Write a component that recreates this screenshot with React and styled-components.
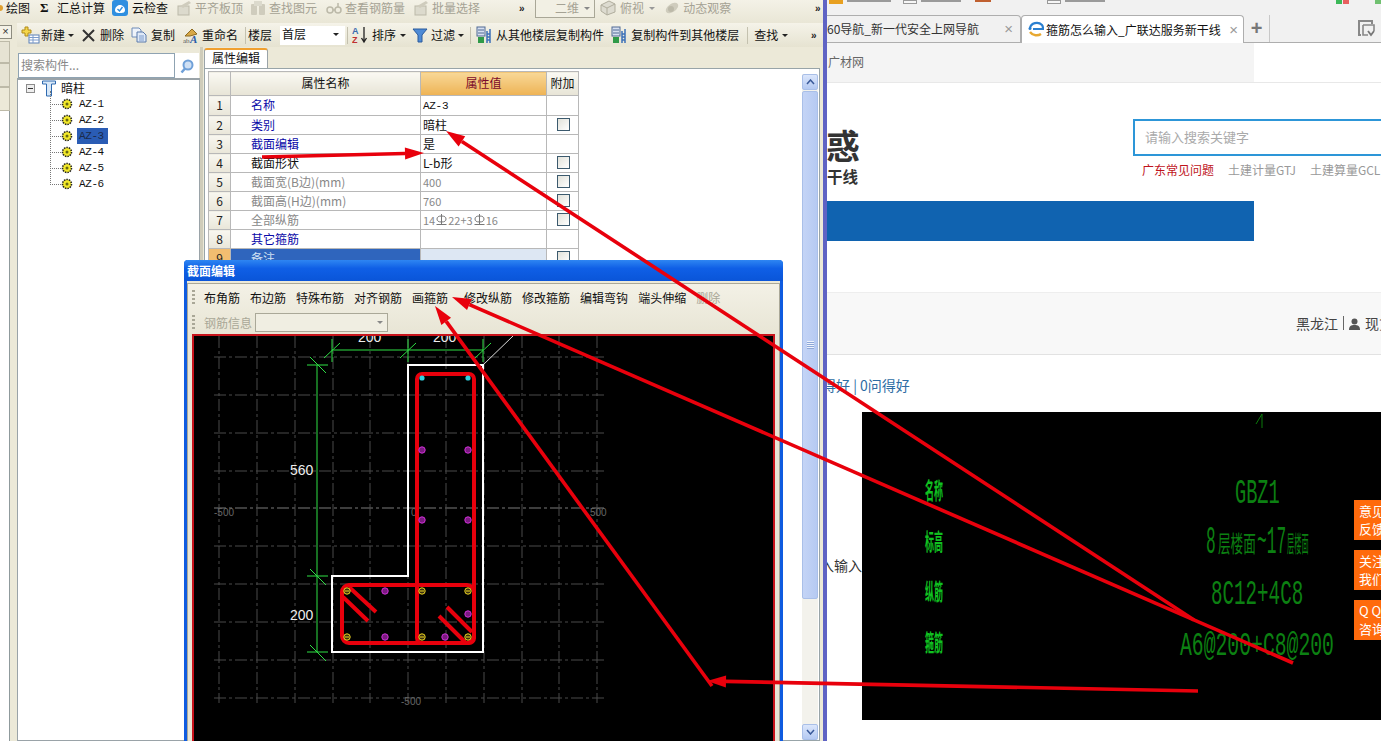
import React from "react";
import styled, { createGlobalStyle } from "styled-components";

const Global = createGlobalStyle`
  html, body { margin: 0; padding: 0; background: #fff; }
  body { font-family: "Noto Sans CJK SC", "Liberation Sans", sans-serif; font-size: 12px; color: #111; }
  * { box-sizing: border-box; }
`;
const Page = styled.div`position: relative; display: flex; width: 1381px; height: 741px; overflow: hidden;`;
const LeftApp = styled.div`width: 823px; height: 741px; display: flex; flex-direction: column; background: #ece9d8; flex: none;`;
const Divider = styled.div`width: 4px; background: #5f63c4; flex: none;`;
const Browser = styled.div`flex: 1; min-width: 0; height: 741px; display: flex; flex-direction: column; background: #fff; overflow: hidden;`;

const TopBar = styled.div`height: 23px; display: flex; align-items: center; padding-bottom: 7px; background: linear-gradient(#f4f2e7, #e9e6d6); white-space: nowrap; line-height: 14px;`;
const TopDot = styled.span`width: 3px; height: 6px; background: #e0a030; border-radius: 0 3px 3px 0; flex: none;`;
const Tool = styled.span`
  display: inline-flex; align-items: center; flex: none; gap: ${p => p.$gap ?? 3}px; margin-left: ${p => p.$ml ?? 0}px;
  color: ${p => (p.$off ? "#a5a294" : "#111")}; white-space: nowrap;
`;
const Sigma = styled.span`font: bold 13px "Liberation Serif", serif; margin-left: 10px; width: 9px;`;
const More = styled.span`
  font: bold 10px "Liberation Sans", sans-serif; width: 8px; letter-spacing: -1px; color: #222; flex: none;
  margin-left: ${p => (p.$end ? "auto" : `${p.$ml ?? 0}px`)}; margin-right: ${p => p.$mr ?? 0}px;
`;
const ViewBox = styled.span`
  display: inline-flex; align-items: center; justify-content: space-between; width: 60px; height: 20px; margin-left: 8px; flex: none;
  border: 1px solid #a9a797; padding: 0 4px 0 19px; color: #a5a294; background: #f2f0e4;
`;
const Caret = styled.span`
  width: 0; height: 0; border-left: 3px solid transparent; border-right: 3px solid transparent; border-top: 3px solid ${p => p.$c || "#222"};
  margin-left: ${p => p.$ml ?? 0}px; flex: none;
`;
const Body = styled.div`flex: 1; min-height: 0; display: flex;`;
const SideStrip = styled.div`width: 12px; margin-right: 5px; flex: none; display: flex; flex-direction: column; padding-top: 2px;`;
const CloseTab = styled.div`height: 14px; border: 1px solid #8d8c80; border-left: 0; background: #f4f2e7; font: 11px/11px "Liberation Sans", sans-serif; text-align: center; color: #333;`;
const SideBlock = styled.div`height: ${p => p.$h}px; width: 10px; background: ${p => p.$c}; border: 1px solid #bdbaa8; border-left: 0; margin-top: ${p => p.$mt ?? 0}px;`;
const SideWhite = styled.div`flex: 1; width: 10px; background: #fff; border-right: 1px solid #8f9a9c;`;
const Main = styled.div`flex: 1; min-width: 0; display: flex; flex-direction: column;`;
const SecondBar = styled.div`height: 24px; display: flex; align-items: center; background: linear-gradient(#f5f3e9, #e6e3d1); line-height: 14px;`;
const Sep = styled.span`width: 1px; height: 17px; background: #c4c1af; margin-left: ${p => p.$ml ?? 0}px; flex: none;`;
const FloorSelect = styled.span`
  width: 65px; height: 19px; margin-left: 8px; background: #fff; display: inline-flex; align-items: center; justify-content: space-between;
  padding: 0 6px 2px 2px; flex: none;
`;
const Columns = styled.div`flex: 1; min-height: 0; display: flex;`;
const TreePanel = styled.div`width: 183px; flex: none; display: flex; flex-direction: column; padding-top: 6px;`;
const SearchRow = styled.div`height: 25px; display: flex; background: #fff; width: 181px; margin-left: 1px;`;
const SearchInput = styled.div`width: 157px; height: 25px; border: 1px solid #8fa3b2; color: #888; padding: 3px 2px; background: #fff; line-height: 16px;`;
const SearchBtn = styled.div`flex: 1; display: flex; align-items: center; justify-content: center;`;
const Tree = styled.div`flex: 1; background: #fff; border: 1px solid #9aa3a8; border-top: 2px solid #9aa3a8; position: relative;`;
const RootRow = styled.div`height: 16px; display: flex; align-items: center; padding-left: 8px; gap: 5px; line-height: 14px;`;
const MinusBox = styled.span`width: 9px; height: 9px; border: 1px solid #8c8c8c; background: #eee; display: flex; align-items: center; justify-content: center; margin-right: 2px; &::after{content:""; width:5px;height:1px;background:#333;}`;
const ChildRow = styled.div`
  position: relative; height: 16px; display: flex; align-items: center; padding-left: 43px; gap: 4px;
  &::before { content: ""; position: absolute; left: 32px; top: ${p => (p.$first ? -5 : -8)}px; width: 10px; height: ${p => (p.$first ? 13 : 16)}px; border-left: 1px dotted #777; border-bottom: 1px dotted #777; }
`;
const ChildLabel = styled.span`
  width: 31px; height: 16px; padding-left: 2px; font: 11px/16px "Liberation Mono", monospace; letter-spacing: -.4px;
  background: ${p => (p.$sel ? "#2a5cb4" : "transparent")}; color: ${p => (p.$sel ? "#1a2a4a" : "#111")};
`;
const Splitter = styled.div`width: 3px; background: #cfccba; flex: none;`;
const Editor = styled.div`width: 617px; flex: none; display: flex; flex-direction: column; padding-left: 1px;`;
const TabRow = styled.div`height: 21px; display: flex; align-items: flex-end;`;
const Tab = styled.div`height: 20px; width: 64px; background: #fff; border: 1px solid #9aa3a8; border-top: 2px solid #f0a030; border-bottom: 0; border-radius: 3px 3px 0 0; text-align: center; line-height: 15px;`;
const Sheet = styled.div`flex: 1; min-height: 0; background: #fff; border: 1px solid #98a4a8; border-right: 1px solid #98a4a8; display: flex; padding: 2px 1px 0 3px; justify-content: space-between;`;
const PropTable = styled.table`
  border-collapse: collapse; table-layout: fixed; width: 370px; height: max-content; border: 1px solid #b4b4b4;
  td, th { border: 1px solid #b8b8b8; padding: 0 0 1px; height: 19px; line-height: 16px; font-weight: normal; overflow: hidden; white-space: nowrap; }
`;
const HeadCell = styled.th`
  && { height: 24px; } text-align: center; background: ${p => (p.$hot ? "linear-gradient(#f8d898,#eeb354)" : "linear-gradient(#faf9f3,#e7e4d6)")};
  color: ${p => (p.$hot ? "#7a0a2a" : "#111")};
`;
const NumCell = styled.td`text-align: center; background: ${p => (p.$hot ? "#f2bd70" : "linear-gradient(#f8f7f0,#e9e6d9)")}; color: #222;`;
const NameCell = styled.td`
  && { padding-left: 20px; } color: ${p => p.$c}; background: ${p => (p.$sel ? "#2f65bd" : "#fff")};
`;
const ValueCell = styled.td`&& { padding-left: 2px; } color: ${p => p.$c || "#111"}; background: ${p => (p.$sel ? "#dde7f3" : "#fff")};`;
const Small = styled.span`font-size: 11px; display: inline-flex; align-items: center;`;
const Mono = styled.span`font-family: "Liberation Mono", monospace; font-size: 11px; letter-spacing: -.3px;`;
const CheckCell = styled.td`&& { padding-left: 1px; } text-align: center;`;
const Check = styled.span`display: block; width: 13px; height: 13px; margin: 0 auto; border: 1px solid #3c5a6e; background: linear-gradient(135deg, #e2e2da, #fff);`;
const ScrollTrack = styled.div`width: 16px; margin-top: 3px; display: flex; flex-direction: column; background: #f3f2ec; flex: none;`;
const ScrollBtn = styled.div`height: 16px; background: linear-gradient(#dbe6fb, #b4c9f2); border: 1px solid #a9bfe8; border-radius: 2px; display: flex; align-items: center; justify-content: center; color: #3a5a9a;`;
const ScrollThumb = styled.div`
  height: 508px; margin-top: 1px; background: linear-gradient(90deg, #c4d4f6, #b6caf2); border: 1px solid #a9bfe8; border-radius: 2px;
  display: flex; align-items: center; justify-content: center;
  &::after { content: ""; width: 7px; height: 8px; background: repeating-linear-gradient(#eef3fd 0 1px, #8ea8d8 1px 2px); }
`;
const ScrollGap = styled.div`flex: 1;`;

const Dialog = styled.div`
  position: absolute; left: 184px; top: 260px; width: 599px; height: 481px; background: #ece9d8;
  border: 3px solid #0f5be0; border-top: 0; border-bottom: 0; display: flex; flex-direction: column; border-radius: 4px 4px 0 0;
`;
const DialogTitle = styled.div`height: 21px; margin: 0 -3px; padding: 2px 3px 0; color: #fff; font-weight: bold; background: linear-gradient(#2e86f2, #0f5fe6 40%, #0a55d8); line-height: 18px; border-radius: 4px 4px 0 0;`;
const DialogBody = styled.div`flex: 1; margin-top: 2px; border: 1px solid #aaa898; border-bottom: 0; display: flex; flex-direction: column; padding: 0 1px 0 4px; min-height: 0; background: linear-gradient(#f3f1e6, #e8e5d5 50px);`;
const DlgRow = styled.div`height: ${p => p.$h}px; display: flex; align-items: center; gap: 10px; padding-left: 0; flex: none;`;
const Grip = styled.span`width: 3px; height: 14px; margin-right: -1px; flex: none; background: repeating-linear-gradient(#a9a797 0 2px, transparent 2px 4px);`;
const DlgItem = styled.span`color: ${p => (p.$off ? "#a9a797" : "#111")}; flex: none; margin-left: ${p => p.$ml ?? 0}px;`;
const DlgSelect = styled.span`width: 133px; height: 19px; margin-left: -7px; border: 1px solid #aaa898; background: #f0eee2; display: inline-flex; align-items: center; justify-content: flex-end; padding-right: 4px;`;
const Canvas = styled.div`flex: 1; min-height: 0; width: 583px; border: 2px solid #c8141c; border-bottom: 0; background: #000; overflow: hidden; svg { display: block; }`;

const TopStrip = styled.div`height: 5px; flex: none; background: #f1f1f1; display: flex; align-items: flex-start; overflow: hidden;`;
const Chip = styled.span`width: ${p => p.$w}px; height: ${p => p.$h ?? 4}px; margin-left: ${p => p.$ml}px; background: ${p => p.$c}; flex: none; border: ${p => (p.$line ? "1px solid #999" : "0")};`;
const TabStrip = styled.div`height: 38px; flex: none; background: #f1f1f1; border-bottom: 1px solid #aeaeae; display: flex; align-items: flex-end; padding-top: 10px;`;
const BTab = styled.div`
  width: ${p => p.$w}px; height: 28px; margin-bottom: -1px; flex: none; display: flex; align-items: center; padding: 0 ${p => p.$pr ?? 5}px 1px ${p => p.$pl ?? 0}px; gap: 2px; overflow: hidden;
  background: ${p => (p.$on ? "#fff" : "#f1f1f1")}; border: 1px solid #aeaeae; border-bottom: ${p => (p.$on ? "0" : "1px solid #aeaeae")}; border-radius: 4px 4px 0 0; color: ${p => (p.$on ? "#111" : "#333")};
  ${p => !p.$on && "border-left: 0; border-radius: 0 4px 0 0;"}
`;
const BTabText = styled.span`flex: 1; white-space: nowrap; overflow: hidden;`;
const BClose = styled.span`font: 15px/15px "Liberation Sans", sans-serif; color: #999;`;
const Plus = styled.span`width: 26px; height: 27px; flex: none; border-right: 1px solid #c8c8c8; text-align: center; font: bold 20px/26px "Liberation Sans", sans-serif; color: #777;`;
const RestoreWrap = styled.span`margin-left: 88px; margin-bottom: 5px; flex: none; display: flex;`;
const BookRow = styled.div`height: 40px; flex: none; border-bottom: 1px solid #e8e8e8;`;
const BookFill = styled.div`width: 427px; height: 39px; background: #f4f4f4; padding: 12px 0 0 1px; color: #666; line-height: 14px;`;
const HeadRow = styled.div`height: 118px; flex: none; position: relative; display: flex;`;
const Brand = styled.div`width: 306px; padding-top: 43px; color: #333; font-weight: bold; flex: none;`;
const BrandBig = styled.div`font-size: 34px; line-height: 38px; margin-left: -1px;`;
const BrandSmall = styled.div`font-size: 15.5px; line-height: 20px; margin-top: 2px;`;
const SearchCol = styled.div`flex: 1; padding-top: 36px; min-width: 0;`;
const WebSearch = styled.div`width: 300px; height: 37px; border: 2px solid #2d96d8; padding-left: 10px; line-height: 31px; color: #aaa; font-size: 13px;`;
const HotLinks = styled.div`display: flex; margin: 5px 0 0 9px; line-height: 18px; white-space: nowrap; color: #999;`;
const HotLink = styled.span`margin-right: 14px; flex: none; color: ${p => p.$c || "#999"};`;
const BlueBar = styled.div`width: 427px; height: 40px; flex: none; background: #1063b0;`;
const NavBand = styled.div`
  height: 63px; margin-top: 51px; flex: none; background: #f8f8f8; border-top: 1px solid #eee; border-bottom: 1px solid #e2e2e2;
  padding: 20px 0 0 469px; display: flex; align-items: flex-start; font-size: 14px; line-height: 20px; color: #444; white-space: nowrap; gap: 5px;
`;
const NavBar = styled.span`width: 1px; height: 14px; background: #666; margin-top: 3px; flex: none;`;
const NavUser = styled.span`margin-top: 5px; display: flex; flex: none;`;
const Meta = styled.div`height: 57px; flex: none; margin-left: -5px; padding-top: 20px; font-size: 14px; line-height: 20px; color: #2e6da4; white-space: nowrap;`;
const ContentRow = styled.div`flex: 1; display: flex; min-height: 0;`;
const Lead = styled.div`width: 35px; padding-top: 143px; font-size: 14px; line-height: 20px; color: #333; white-space: nowrap; overflow: hidden; direction: rtl; flex: none;`;
const Picture = styled.div`width: 519px; height: 308px; background: #000; flex: none; svg { display: block; }`;
const SideBtns = styled.div`position: absolute; left: 1354px; top: 500px; width: 27px; display: flex; flex-direction: column; gap: 10px; overflow: hidden;`;
const SideBtn = styled.div`width: 40px; height: 40px; background: #ff6a0c; color: #fff; font-size: 13px; line-height: 18px; padding: 2px 0 0 5px;`;
const Overlay = styled.svg`position: absolute; left: 0; top: 0; pointer-events: none;`;

/* --- icons --- */
const I = ({ children, w = 16, h = 16 }) => <svg width={w} height={h} viewBox={`0 0 ${w} ${h}`} style={{ flex: "none" }}>{children}</svg>;
const IcNew = () => <I w={20} h={18}><path d="M5 1h3v3h3v3H8v3H5V7H2V4h3z" fill="#f5d64a" stroke="#b08a18" /><rect x="9" y="9" width="10" height="8" fill="#fff" stroke="#5b80b8" /><path d="M9 11.5h10M9 14h10M13 9v8" stroke="#7c9ccc" /></I>;
const IcX = () => <I w={13} h={13}><path d="M1 1l11 11M12 1L1 12" stroke="#333" strokeWidth="2" /></I>;
const IcCopy = () => <I><path d="M1 1h7l2 2v7H1z" fill="#eef3fa" stroke="#6f8cb8" /><path d="M6 5h6l3 3v7H6z" fill="#dfe9f7" stroke="#5a7aac" /><path d="M8 9h5M8 11h5M8 13h5" stroke="#7c9ccc" /></I>;
const IcRename = () => <I w={16} h={17}><path d="M2 9l7-7 5 5-7 2z" fill="#d8a848" stroke="#8d6a20" /><text x="0" y="16" fontSize="7" fontFamily="Liberation Serif" fill="#555">ab</text><text x="7" y="16" fontSize="11" fontWeight="bold" fontStyle="italic" fontFamily="Liberation Serif" fill="#2a5ca8">A</text></I>;
const IcSort = () => <I w={16} h={18}><text x="0" y="8" fontSize="9" fontWeight="bold" fontFamily="Liberation Sans" fill="#3a6cb0">A</text><text x="0" y="17" fontSize="9" fontWeight="bold" fontFamily="Liberation Sans" fill="#c03030">Z</text><path d="M12 1v14M9.5 12l2.5 4 2.5-4" stroke="#222" fill="none" strokeWidth="1.3" /></I>;
const IcFilter = ({ c = "#4d8ad6" }) => <I><path d="M1 2h14L10 8v7H6V8z" fill={c} stroke="#2a5a9c" /></I>;
const IcCopyFloor = () => <I w={17} h={18}><rect x="1" y="1" width="8" height="9" fill="#d6dff0" stroke="#506a94" /><path d="M2 4h6M2 7h6" stroke="#506a94" /><rect x="2" y="11" width="6" height="6" fill="#2f9a48" /><path d="M11 5v12M14 3v14M11 8h3M11 11h3M11 14h3" stroke="#3d70b8" strokeWidth="1.5" /></I>;
const IcCloud = () => <I><rect width="16" height="16" rx="3" fill="#2f8fe0" /><path d="M3 10c0-3 3-5 5-5s5 2 5 5-3 3-5 3-5 0-5-3z" fill="#fff" /><path d="M5.5 9l2 2 3-4" stroke="#2f8fe0" strokeWidth="1.4" fill="none" /></I>;
const IcGhost = () => <I><rect x="2" y="6" width="11" height="9" fill="#dcdacd" stroke="#bcb9a9" /><path d="M4 6l9-5 2 2-8 5" fill="#cfccbd" /></I>;
const IcBinoc = () => <I><rect x="1" y="4" width="6" height="11" rx="1" fill="#cfccbd" /><rect x="9" y="4" width="6" height="11" rx="1" fill="#cfccbd" /><rect x="4" y="1" width="8" height="5" fill="#dcdacd" /></I>;
const IcGlasses = () => <I><circle cx="4" cy="10" r="3" fill="none" stroke="#bcb9a9" strokeWidth="1.5" /><circle cx="12" cy="10" r="3" fill="none" stroke="#bcb9a9" strokeWidth="1.5" /><path d="M7 10h2M12 7V3" stroke="#bcb9a9" strokeWidth="1.5" /></I>;
const IcCube = () => <I><path d="M1 5l8-4 6 3v8l-8 3-6-4z" fill="#dddbd0" stroke="#b0ad9d" /><path d="M1 5l6 3v7M7 8l8-4" stroke="#b0ad9d" fill="none" /></I>;
const IcOrbit = () => <I><ellipse cx="8" cy="8" rx="7" ry="4" transform="rotate(-35 8 8)" fill="#cfccbd" /><circle cx="7" cy="9" r="3" fill="#bcb9a9" /></I>;
const IcLens = () => <I><circle cx="9" cy="7" r="4.5" fill="#cfe0f4" stroke="#6fa0d8" strokeWidth="2" /><path d="M6 10.5l-3.5 4" stroke="#6fa0d8" strokeWidth="2.5" /></I>;
const IcFunnelTree = () => <I w={14} h={17}><path d="M0.5 1h13v3h-4v12h-5V4h-4z" fill="#d8e8f8" stroke="#2f6ab0" /></I>;
const IcGear = () => <I w={12} h={12}><circle cx="6" cy="6" r="4.5" fill="#f4ea2a" stroke="#222" strokeWidth="1.6" strokeDasharray="1.5 1" /><circle cx="6" cy="6" r="1.5" fill="#6a6a10" /></I>;
const IcIE = () => <I><path d="M2 7c1-5 8-7 12-3 1 1 1 3 1 4H5" stroke="#2a7fd0" strokeWidth="2.2" fill="none" /><path d="M2 11c3 4 8 4 11 2" stroke="#e8a830" strokeWidth="2.4" fill="none" /><circle cx="2" cy="7.5" r="1.5" fill="#2a7fd0" /></I>;
const IcUser = () => <I w={11} h={12}><circle cx="5.5" cy="3.5" r="3" fill="#555" /><path d="M0 12c0-4 2-5 5.5-5s5.5 1 5.5 5z" fill="#555" /></I>;
const IcRestore = () => <I w={17} h={17}><path d="M3 15H1V1h13v3" fill="none" stroke="#888" strokeWidth="2" /><path d="M5 5h11v6M5 5v10h5" fill="none" stroke="#888" strokeWidth="1.6" /><path d="M10 11l3 4 3-4" fill="none" stroke="#777" strokeWidth="1.8" /></I>;
const Rebar = () => <svg width="11" height="11" viewBox="0 0 11 11" style={{ margin: "0 1px" }}><path d="M5.5 0v10M0.5 10.5h10" stroke="#777" /><ellipse cx="5.5" cy="5" rx="4.5" ry="3" fill="none" stroke="#777" /></svg>;

/* --- drawings --- */
const Arrow = ({ x1, y1, x2, y2, w = 3.6, head = 19, wide = 6 }) => {
  const a = Math.atan2(y2 - y1, x2 - x1);
  const c = Math.cos(a), s = Math.sin(a);
  const bx = x2 - c * head, by = y2 - s * head;
  const pts = `${x2},${y2} ${bx - s * wide},${by + c * wide} ${bx + s * wide},${by - c * wide}`;
  return <g><line x1={x1} y1={y1} x2={bx} y2={by} stroke="#e8000c" strokeWidth={w} /><polygon points={pts} fill="#e8000c" /></g>;
};
const hGrid = [358, 396, 434, 472, 509, 547, 585, 623, 661, 699];
const vGrid = [219, 257, 295, 333, 370, 408, 446, 484, 522, 559, 597];
const cyan = [[422, 379], [468, 379]];
const magenta = [[422, 451], [468, 451], [422, 521], [468, 521], [385, 592], [468, 615], [385, 638], [445, 638]];
const yellow = [[347, 592], [422, 592], [468, 592], [347, 638], [422, 638], [468, 638]];
const G = "#2fe045";
const CadDrawing = () => (
  <svg width="579" height="404" viewBox="194 337 579 404">
    {hGrid.map(y => <line key={y} x1="214" x2="604" y1={y} y2={y} stroke={y === 509 ? "#7a7a7a" : "#4a4a4a"} strokeDasharray="12 3 3 3" />)}
    {vGrid.map(x => <line key={x} x1={x} x2={x} y1="337" y2="704" stroke="#4a4a4a" strokeDasharray="12 3 3 3" />)}
    <g fontFamily="Liberation Sans" fontSize="10" fill="#666">
      <text x="214" y="517">-500</text><text x="411" y="517">0</text><text x="590" y="517">500</text><text x="401" y="706">-500</text>
    </g>
    <g stroke={G} fill="none">
      <path d="M332 351H483M317 366V653" />
      <path d="M332 340V363M408 340V363M483 340V363M324 359L340 344M400 359L416 344M475 359L491 344" />
      <path d="M307 366H328M310 358L326 374M307 577H328M310 570L326 586M307 653H328M310 646L326 662" />
    </g>
    <g fontFamily="Liberation Sans" fontSize="14" fill="#eee">
      <text x="358" y="343">200</text><text x="433" y="343">200</text><text x="290" y="476">560</text><text x="290" y="621">200</text>
    </g>
    <path d="M483 366L513 337" stroke="#ddd" />
    <path d="M408 366H483V653H332V577H408Z" fill="none" stroke="#fff" strokeWidth="2" />
    <g fill="none" stroke="#e8000c" strokeWidth="4" strokeLinejoin="round">
      <rect x="417" y="375" width="57" height="269" rx="5" />
      <rect x="342" y="586" width="132" height="58" rx="7" />
      <path d="M349 588L376 613M343 598L368 622M447 608L472 633M439 617L465 643" />
    </g>
    {cyan.map(([x, y]) => <circle key={`c${x}${y}`} cx={x} cy={y} r="2.6" fill="#30d0e0" />)}
    {magenta.map(([x, y]) => <circle key={`m${x}${y}`} cx={x} cy={y} r="3.2" fill="#7a1a80" stroke="#d030d8" />)}
    {yellow.map(([x, y]) => <g key={`y${x}${y}`}><circle cx={x} cy={y} r="3.2" fill="#3a3010" stroke="#f0d820" /><line x1={x - 2} x2={x + 2} y1={y} y2={y} stroke="#f0d820" /></g>)}
  </svg>
);
const Squeezed = ({ x, y, sx, sy, size = 12, c = "#0c8012", weight = "normal", children, family = "Liberation Mono" }) => (
  <text transform={`translate(${x} ${y}) scale(${sx} ${sy})`} fontSize={size} fill={c} fontWeight={weight} fontFamily={family}>{children}</text>
);
const Label = ({ y, children }) => <Squeezed x={925} y={y} sx={0.75} sy={1.9} c="#10c020" weight="bold" family="Noto Sans CJK SC">{children}</Squeezed>;
const GreenSheet = () => (
  <svg width="519" height="308" viewBox="862 412 519 308">
    <path d="M1262 414V428M1262 414L1256 424" stroke="#0a7a0a" fill="none" />
    <Label y={499}>名称</Label>
    <Label y={550}>标高</Label>
    <Label y={600}>纵筋</Label>
    <Label y={651}>箍筋</Label>
    <Squeezed x={1235} y={503} sx={1.24} sy={2.3} size={15}>GBZ1</Squeezed>
    <Squeezed x={1206} y={553} sx={0.95} sy={2.3} size={17}>8</Squeezed>
    <Squeezed x={1218} y={552} sx={1.05} sy={1.9} size={12} family="Noto Sans CJK SC">层楼面</Squeezed>
    <Squeezed x={1257} y={553} sx={0.95} sy={2.3} size={17}>~17</Squeezed>
    <Squeezed x={1287} y={552} sx={0.6} sy={1.9} size={12} family="Noto Sans CJK SC">层楼面</Squeezed>
    <Squeezed x={1211} y={604} sx={1.13} sy={2.05} size={17}>8C12+4C8</Squeezed>
    <Squeezed x={1180} y={655} sx={1.41} sy={2.4} size={14}>A6@200+C8@200</Squeezed>
  </svg>
);

const rows = [
  { n: 1, name: "名称", c: "#0a0aa8", value: <Mono>AZ-3</Mono>, check: false },
  { n: 2, name: "类别", c: "#0a0aa8", value: "暗柱", check: true },
  { n: 3, name: "截面编辑", c: "#0a0aa8", value: "是", check: false },
  { n: 4, name: "截面形状", c: "#111", value: "L-b形", check: true },
  { n: 5, name: "截面宽(B边)(mm)", c: "#888", value: <Small>400</Small>, vc: "#888", check: true },
  { n: 6, name: "截面高(H边)(mm)", c: "#888", value: <Small>760</Small>, vc: "#888", check: true },
  { n: 7, name: "全部纵筋", c: "#888", value: <Small>14<Rebar />22+3<Rebar />16</Small>, vc: "#888", check: true },
  { n: 8, name: "其它箍筋", c: "#0a0aa8", value: "", check: false },
  { n: 9, name: "备注", c: "#cfe0f4", value: "", sel: true, check: true },
];
const dlgItems = ["布角筋", "布边筋", "特殊布筋", "对齐钢筋", "画箍筋"];
const dlgItems2 = ["修改箍筋", "编辑弯钩", "端头伸缩"];

export default function App() {
  return (
    <Page>
      <Global />
      <LeftApp>
        <TopBar>
          <TopDot />
          <Tool $ml={3}>绘图</Tool>
          <Sigma>Σ</Sigma>
          <Tool $ml={8}>汇总计算</Tool>
          <Tool $ml={7} $gap={4}><IcCloud />云检查</Tool>
          <Tool $ml={8} $off><IcGhost />平齐板顶</Tool>
          <Tool $ml={7} $off><IcBinoc />查找图元</Tool>
          <Tool $ml={9} $off><IcGlasses />查看钢筋量</Tool>
          <Tool $ml={8} $off><IcGhost />批量选择</Tool>
          <More $ml={39}>»</More>
          <ViewBox>二维<Caret $c="#888" /></ViewBox>
          <Tool $ml={5} $gap={4} $off><IcCube />俯视<Caret $c="#999" $ml={1} /></Tool>
          <Tool $ml={9} $off><IcOrbit />动态观察</Tool>
          <More $end>»</More>
        </TopBar>
        <Body>
          <SideStrip>
            <CloseTab>×</CloseTab>
            <SideBlock $h={22} $c="#e6e3d3" $mt={2} />
            <SideBlock $h={24} $c="#e6e3d3" />
            <SideBlock $h={24} $c="#ece9d8" />
            <SideWhite />
          </SideStrip>
          <Main>
            <SecondBar>
              <Tool $ml={3} $gap={1}><IcNew />新建<Caret $ml={2} /></Tool>
              <Tool $ml={8} $gap={5}><IcX />删除</Tool>
              <Tool $ml={7} $gap={4}><IcCopy />复制</Tool>
              <Tool $ml={8} $gap={3}><IcRename />重命名</Tool>
              <Sep $ml={7} />
              <Tool $ml={2}>楼层</Tool>
              <FloorSelect>首层<Caret /></FloorSelect>
              <Sep $ml={2} />
              <Tool $ml={4} $gap={4}><IcSort />排序<Caret /></Tool>
              <Tool $ml={6}><IcFilter />过滤<Caret /></Tool>
              <Sep $ml={6} />
              <Tool $ml={5}><IcCopyFloor />从其他楼层复制构件</Tool>
              <Tool $ml={7}><IcCopyFloor />复制构件到其他楼层</Tool>
              <Sep $ml={8} />
              <Tool $ml={6}>查找<Caret $ml={1} /></Tool>
              <More $end $mr={4}>»</More>
            </SecondBar>
            <Columns>
              <TreePanel>
                <SearchRow>
                  <SearchInput>搜索构件...</SearchInput>
                  <SearchBtn><IcLens /></SearchBtn>
                </SearchRow>
                <Tree>
                  <RootRow><MinusBox /><IcFunnelTree />暗柱</RootRow>
                  {["AZ-1", "AZ-2", "AZ-3", "AZ-4", "AZ-5", "AZ-6"].map((t, i) => (
                    <ChildRow key={t} $first={i === 0}><IcGear /><ChildLabel $sel={t === "AZ-3"}>{t}</ChildLabel></ChildRow>
                  ))}
                </Tree>
              </TreePanel>
              <Splitter />
              <Editor>
                <TabRow><Tab>属性编辑</Tab></TabRow>
                <Sheet>
                  <PropTable>
                    <colgroup><col width="22" /><col width="190" /><col width="126" /><col width="32" /></colgroup>
                    <thead>
                      <tr><HeadCell /><HeadCell>属性名称</HeadCell><HeadCell $hot>属性值</HeadCell><HeadCell>附加</HeadCell></tr>
                    </thead>
                    <tbody>
                      {rows.map(r => (
                        <tr key={r.n}>
                          <NumCell $hot={r.sel}>{r.n}</NumCell>
                          <NameCell $c={r.c} $sel={r.sel}>{r.name}</NameCell>
                          <ValueCell $c={r.vc} $sel={r.sel}>{r.value}</ValueCell>
                          <CheckCell>{r.check && <Check />}</CheckCell>
                        </tr>
                      ))}
                    </tbody>
                  </PropTable>
                  <ScrollTrack>
                    <ScrollBtn><svg width="9" height="6"><path d="M1 5l3.5-4L8 5" fill="none" stroke="#3a5a9a" strokeWidth="1.5" /></svg></ScrollBtn>
                    <ScrollThumb />
                    <ScrollGap />
                    <ScrollBtn><svg width="9" height="6"><path d="M1 1l3.5 4L8 1" fill="none" stroke="#3a5a9a" strokeWidth="1.5" /></svg></ScrollBtn>
                  </ScrollTrack>
                </Sheet>
              </Editor>
            </Columns>
          </Main>
        </Body>
      </LeftApp>
      <Divider />
      <Browser>
        <TopStrip>
          <Chip $ml={2} $w={14} $c="#e8a020" />
          <Chip $ml={4} $w={44} $c="#9a9a9a" $h={2} />
          <Chip $ml={12} $w={14} $c="#f6f6f6" $line />
          <Chip $ml={4} $w={40} $c="#9a9a9a" $h={2} />
          <Chip $ml={14} $w={16} $c="#c06030" $h={2} />
          <Chip $ml={56} $w={14} $c="#f6f6f6" $line />
          <Chip $ml={4} $w={40} $c="#9a9a9a" $h={2} />
          <Chip $ml={231} $w={6} $c="#3cb858" />
          <Chip $ml={1} $w={6} $c="#e86060" />
          <Chip $ml={26} $w={14} $c="#70c070" />
          <Chip $ml={8} $w={14} $c="#f4c0c0" $line />
          <Chip $ml={6} $w={14} $c="#f4c0c0" $line />
          <Chip $ml={24} $w={14} $c="#e8b840" />
        </TopStrip>
        <TabStrip>
          <BTab $w={194} $pr={7}><BTabText>60导航_新一代安全上网导航</BTabText><BClose>×</BClose></BTab>
          <BTab $w={223} $on $pl={6}><IcIE /><BTabText>箍筋怎么输入_广联达服务新干线</BTabText><BClose>×</BClose></BTab>
          <Plus>+</Plus>
          <RestoreWrap><IcRestore /></RestoreWrap>
        </TabStrip>
        <BookRow><BookFill>广材网</BookFill></BookRow>
        <HeadRow>
          <Brand><BrandBig>惑</BrandBig><BrandSmall>干线</BrandSmall></Brand>
          <SearchCol>
            <WebSearch>请输入搜索关键字</WebSearch>
            <HotLinks><HotLink $c="#c0141c">广东常见问题</HotLink><HotLink>土建计量GTJ</HotLink><HotLink>土建算量GCL</HotLink></HotLinks>
          </SearchCol>
        </HeadRow>
        <BlueBar />
        <NavBand>黑龙江<NavBar /><NavUser><IcUser /></NavUser>现货</NavBand>
        <Meta>得好 | 0问得好</Meta>
        <ContentRow>
          <Lead>入输入</Lead>
          <Picture><GreenSheet /></Picture>
        </ContentRow>
      </Browser>
      <Dialog>
        <DialogTitle>截面编辑</DialogTitle>
        <DialogBody>
          <DlgRow $h={26}>
            <Grip />
            {dlgItems.map(t => <DlgItem key={t}>{t}</DlgItem>)}
            <DlgItem $ml={6}>修改纵筋</DlgItem>
            {dlgItems2.map(t => <DlgItem key={t}>{t}</DlgItem>)}
            <DlgItem $off>删除</DlgItem>
          </DlgRow>
          <DlgRow $h={24}>
            <Grip />
            <DlgItem $off>钢筋信息</DlgItem>
            <DlgSelect><Caret $c="#888" /></DlgSelect>
          </DlgRow>
          <Canvas><CadDrawing /></Canvas>
        </DialogBody>
      </Dialog>
      <SideBtns>
        <SideBtn>意见<br />反馈</SideBtn>
        <SideBtn>关注<br />我们</SideBtn>
        <SideBtn>Q Q<br />咨询</SideBtn>
      </SideBtns>
      <Overlay width="1381" height="741">
        <Arrow x1={262} y1={157} x2={424} y2={153} />
        <Arrow x1={1194} y1={620} x2={446} y2={131} />
        <Arrow x1={1293} y1={663} x2={452} y2={297} />
        <Arrow x1={1198} y1={691} x2={707} y2={681} />
        <Arrow x1={712} y1={686} x2={435} y2={306} />
      </Overlay>
    </Page>
  );
}
